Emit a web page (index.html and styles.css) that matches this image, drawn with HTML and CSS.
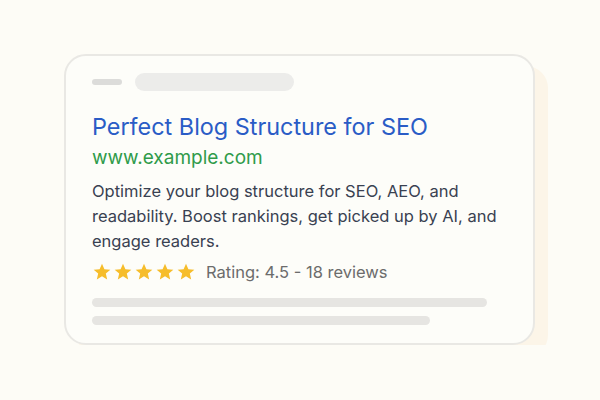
FILE: index.html
```html
<!DOCTYPE html>
<html lang="en">
<head>
    <meta charset="UTF-8">
    <meta name="viewport" content="width=device-width, initial-scale=1.0">
    <title>Search Result Preview</title>
    <link rel="stylesheet" href="styles.css">
</head>
<body>
    <div class="stage">
        <div class="card">
            <div class="top-bar">
                <span class="dash"></span>
                <span class="search-pill"></span>
            </div>
            <h1 class="title">Perfect Blog Structure for SEO</h1>
            <div class="url">www.example.com</div>
            <p class="desc">Optimize your blog structure for SEO, AEO, and readability. Boost rankings, get picked up by AI, and engage readers.</p>
            <div class="rating">
                <div class="stars">
                    <svg viewBox="0 0 24 24"><path d="M12 2l2.9 6.6 7.1.6-5.4 4.7 1.6 7-6.2-3.7-6.2 3.7 1.6-7L2 9.2l7.1-.6z"/></svg>
                    <svg viewBox="0 0 24 24"><path d="M12 2l2.9 6.6 7.1.6-5.4 4.7 1.6 7-6.2-3.7-6.2 3.7 1.6-7L2 9.2l7.1-.6z"/></svg>
                    <svg viewBox="0 0 24 24"><path d="M12 2l2.9 6.6 7.1.6-5.4 4.7 1.6 7-6.2-3.7-6.2 3.7 1.6-7L2 9.2l7.1-.6z"/></svg>
                    <svg viewBox="0 0 24 24"><path d="M12 2l2.9 6.6 7.1.6-5.4 4.7 1.6 7-6.2-3.7-6.2 3.7 1.6-7L2 9.2l7.1-.6z"/></svg>
                    <svg viewBox="0 0 24 24"><path d="M12 2l2.9 6.6 7.1.6-5.4 4.7 1.6 7-6.2-3.7-6.2 3.7 1.6-7L2 9.2l7.1-.6z"/></svg>
                </div>
                <span class="rating-text">Rating: 4.5 - 18 reviews</span>
            </div>
            <div class="lines">
                <span class="line long"></span>
                <span class="line short"></span>
            </div>
        </div>
    </div>
</body>
</html>
```

FILE: styles.css
```css
body {
    margin: 0;
    padding: 0;
    background-color: #fdfcf6;
    font-family: Inter, "Open Sans", Arial, sans-serif;
}
.stage {
    padding: 54px 0 0 64px;
}
.card {
    width: 471px;
    height: 291px;
    box-sizing: border-box;
    padding: 17px 26px 0 26px;
    background-color: #fdfdf9;
    border: 2px solid #e9e8e4;
    border-radius: 22px;
    box-shadow: 13px 12px 0 0 #fcf5e8;
}
.top-bar {
    display: flex;
    align-items: center;
    gap: 13px;
}
.dash {
    width: 30px;
    height: 6px;
    border-radius: 3px;
    background-color: #dcdcda;
}
.search-pill {
    width: 159px;
    height: 18px;
    border-radius: 9px;
    background-color: #ececea;
}
.title {
    margin: 20px 0 0;
    font-size: 23.4px;
    font-weight: normal;
    color: #2a5cc6;
    line-height: 32px;
}
.url {
    margin-top: 3px;
    font-size: 19px;
    color: #2f9b4a;
    line-height: 24px;
}
.desc {
    margin: 9px 0 0;
    font-size: 16.5px;
    line-height: 25px;
    color: #394151;
}
.rating {
    display: flex;
    align-items: center;
    gap: 10px;
    margin-top: 8px;
}
.stars {
    display: flex;
    gap: 1px;
}
.stars svg {
    width: 20px;
    height: 20px;
    fill: #f6bd2b;
}
.rating-text {
    font-size: 16.5px;
    color: #6c6c6c;
}
.lines {
    margin-top: 16px;
    display: flex;
    flex-direction: column;
    gap: 9px;
}
.line {
    height: 9px;
    border-radius: 5px;
    background-color: #e6e5e2;
}
.line.long {
    width: 395px;
}
.line.short {
    width: 338px;
}
```
